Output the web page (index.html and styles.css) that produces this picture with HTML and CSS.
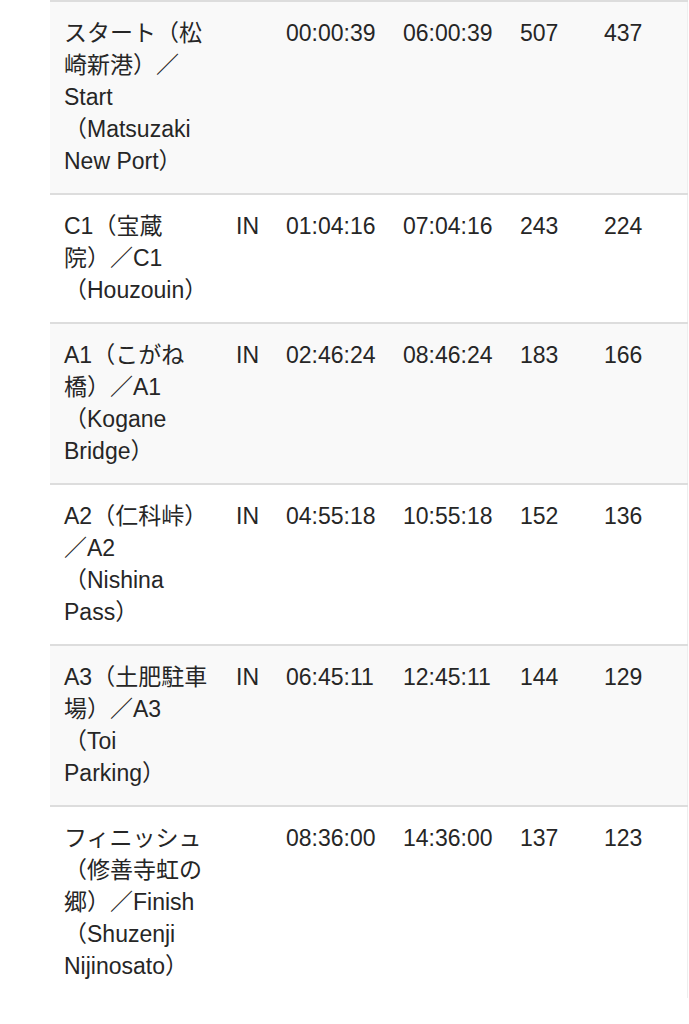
FILE: index.html
```html
<!DOCTYPE html>
<html lang="ja">
<head>
<meta charset="utf-8">
<link rel="stylesheet" href="styles.css">
</head>
<body>
<div class="wrap">
<table class="result">
<colgroup>
<col class="c1"><col class="c2"><col class="c3"><col class="c4"><col class="c5"><col class="c6">
</colgroup>
<tbody>
<tr class="odd"><td class="name">スタート（松崎新港）／Start（Matsuzaki New Port）</td><td></td><td>00:00:39</td><td>06:00:39</td><td>507</td><td>437</td></tr>
<tr><td class="name">C1（宝蔵院）／C1（Houzouin）</td><td>IN</td><td>01:04:16</td><td>07:04:16</td><td>243</td><td>224</td></tr>
<tr class="odd"><td class="name">A1（こがね橋）／A1（Kogane Bridge）</td><td>IN</td><td>02:46:24</td><td>08:46:24</td><td>183</td><td>166</td></tr>
<tr><td class="name">A2（仁科峠）／A2（Nishina Pass）</td><td>IN</td><td>04:55:18</td><td>10:55:18</td><td>152</td><td>136</td></tr>
<tr class="odd"><td class="name">A3（土肥駐車場）／A3（Toi Parking）</td><td>IN</td><td>06:45:11</td><td>12:45:11</td><td>144</td><td>129</td></tr>
<tr><td class="name">フィニッシュ（修善寺虹の郷）／Finish（Shuzenji Nijinosato）</td><td></td><td>08:36:00</td><td>14:36:00</td><td>137</td><td>123</td></tr>
</tbody>
</table>
</div>
</body>
</html>
```
FILE: styles.css
```css
html, body {
  margin: 0;
  padding: 0;
  background: #fff;
}
.wrap {
  padding-left: 50px;
}
.result {
  border-collapse: collapse;
  table-layout: fixed;
  width: 637px;
  font-family: "Liberation Sans", "Noto Sans CJK JP", sans-serif;
  font-size: 23px;
  line-height: 32px;
  color: #262626;
  border-right: 1px solid #eee;
  text-spacing-trim: space-all;
}
.c1 { width: 172px; }
.c2 { width: 50px; }
.c3 { width: 117px; }
.c4 { width: 117px; }
.c5 { width: 84px; }
.c6 { width: 97px; }
.result td {
  vertical-align: top;
  padding: 15px 12px 16px 14px;
  border-top: 2px solid #dddddd;
  word-break: normal;
  line-break: strict;
}
.result td.name {
  padding-right: 14.3px;
}
.result tr.odd td {
  background: #f9f9f9;
}
```
